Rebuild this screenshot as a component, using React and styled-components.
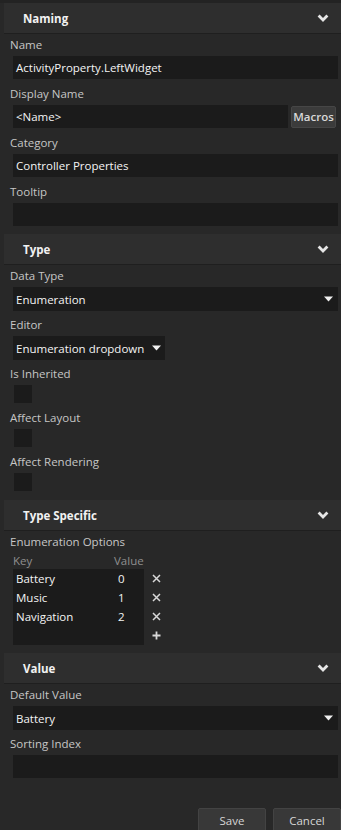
import React from "react";
import styled, { createGlobalStyle } from "styled-components";

const Global = createGlobalStyle`
  html, body { margin: 0; padding: 0; background: #282828; overflow: hidden; }
  body { font-family: "Segoe UI", "Open Sans", "Noto Sans", sans-serif; font-size: 11.5px; }
  * { box-sizing: border-box; }
`;

const Panel = styled.div`
  width: 341px;
  display: flex;
  flex-direction: column;
  background: #282828;
  border-top: 3px solid #232323;
`;

const SectionHeader = styled.div`
  margin-left: 4px;
  height: 31px;
  background: #2e2e2e;
  border-bottom: 1px solid #1f1f1f;
  display: flex;
  align-items: center;
  justify-content: space-between;
  padding: 0 12px 0 19px;
  color: #f2f2f2;
  font-weight: 700;
  font-size: 11.5px;
`;

const Section = styled.div`
  display: flex;
  flex-direction: column;
  padding: 0 3px 8px 10px;
  gap: ${(p) => p.$gap || 3}px;
`;

const Field = styled.div`
  display: flex;
  flex-direction: column;
`;

const Label = styled.div`
  height: 22px;
  line-height: 22px;
  color: #c6c6c6;
`;

const Input = styled.div`
  margin-left: 3px;
  height: 23px;
  background: #1b1b1b;
  color: #f4f4f4;
  display: flex;
  align-items: center;
  padding-left: 3px;
  flex: ${(p) => (p.$grow ? 1 : "none")};
`;

const Row = styled.div`
  display: flex;
  align-items: center;
  gap: 3px;
`;

const MacroButton = styled.div`
  height: 22px;
  width: 45px;
  margin-right: 2px;
  background: #3b3b3b;
  border: 1px solid #464646;
  border-radius: 2px;
  color: #d8d8d8;
  font-weight: 600;
  display: flex;
  align-items: center;
  justify-content: center;
`;

const Select = styled.div`
  margin-left: 3px;
  height: 24px;
  background: #1b1b1b;
  color: #f4f4f4;
  display: flex;
  align-items: center;
  justify-content: space-between;
  gap: 8px;
  padding: 0 5px 0 3px;
  align-self: ${(p) => (p.$inline ? "flex-start" : "stretch")};
  ${(p) => (p.$inline ? "padding-right: 4px;" : "")}
`;

const Check = styled.div`
  margin-left: 4px;
  width: 18px;
  height: 18px;
  background: #1b1b1b;
`;

const CheckField = styled.div`
  display: flex;
  flex-direction: column;
  margin-bottom: 1px;
`;

const TableHead = styled.div`
  display: grid;
  grid-template-columns: 101px 30px;
  margin-left: 3px;
  height: 16px;
  line-height: 16px;
  color: #8f8f8f;
`;

const TableWrap = styled.div`
  display: flex;
  align-items: flex-start;
`;

const TableBody = styled.div`
  margin-left: 3px;
  width: 131px;
  height: 76px;
  background: #1b1b1b;
  display: flex;
  flex-direction: column;
`;

const TableRow = styled.div`
  display: grid;
  grid-template-columns: 101px 30px;
  height: 19px;
  align-items: center;
  color: #f4f4f4;
  & > span:first-child { padding-left: 3px; }
  & > span:last-child { padding-left: 4px; }
`;

const Actions = styled.div`
  display: flex;
  flex-direction: column;
  width: 24px;
`;

const ActionCell = styled.div`
  height: 19px;
  display: flex;
  align-items: center;
  justify-content: center;
`;

const Footer = styled.div`
  display: flex;
  justify-content: flex-end;
  gap: 7px;
  padding-top: 22px;
`;

const Button = styled.div`
  width: 68px;
  height: 24px;
  background: #383838;
  border: 1px solid #434343;
  border-radius: 2px;
  color: #d6d6d6;
  display: flex;
  align-items: center;
  justify-content: center;
`;

const Chevron = () => (
  <svg width="12" height="8" viewBox="0 0 12 8">
    <polyline points="1.6,1.6 6,6 10.4,1.6" fill="none" stroke="#e6e6e6" strokeWidth="2.8" />
  </svg>
);

const Tri = () => (
  <svg width="9" height="6" viewBox="0 0 9 6">
    <polygon points="0,0.5 9,0.5 4.5,5.5" fill="#f0f0f0" />
  </svg>
);

const XIcon = () => (
  <svg width="9" height="9" viewBox="0 0 9 9">
    <path d="M1 1 L8 8 M8 1 L1 8" stroke="#d8d8d8" strokeWidth="1.5" />
  </svg>
);

const PlusIcon = () => (
  <svg width="9" height="9" viewBox="0 0 9 9">
    <path d="M4.5 0.5 V8.5 M0.5 4.5 H8.5" stroke="#d8d8d8" strokeWidth="1.8" />
  </svg>
);

const Header = ({ title }) => (
  <SectionHeader>
    <span>{title}</span>
    <Chevron />
  </SectionHeader>
);

const enumRows = [
  ["Battery", "0"],
  ["Music", "1"],
  ["Navigation", "2"],
];

export default function App() {
  return (
    <>
      <Global />
      <Panel>
        <Header title="Naming" />
        <Section $gap={4}>
          <Field>
            <Label>Name</Label>
            <Input>ActivityProperty.LeftWidget</Input>
          </Field>
          <Field>
            <Label>Display Name</Label>
            <Row>
              <Input $grow>&lt;Name&gt;</Input>
              <MacroButton>Macros</MacroButton>
            </Row>
          </Field>
          <Field>
            <Label>Category</Label>
            <Input>Controller Properties</Input>
          </Field>
          <Field>
            <Label>Tooltip</Label>
            <Input />
          </Field>
        </Section>

        <Header title="Type" />
        <Section>
          <Field>
            <Label>Data Type</Label>
            <Select>
              <span>Enumeration</span>
              <Tri />
            </Select>
          </Field>
          <Field>
            <Label>Editor</Label>
            <Select $inline>
              <span>Enumeration dropdown</span>
              <Tri />
            </Select>
          </Field>
          <CheckField>
            <Label>Is Inherited</Label>
            <Check />
          </CheckField>
          <CheckField>
            <Label>Affect Layout</Label>
            <Check />
          </CheckField>
          <CheckField>
            <Label>Affect Rendering</Label>
            <Check />
          </CheckField>
        </Section>

        <Header title="Type Specific" />
        <Section>
          <Field>
            <Label>Enumeration Options</Label>
            <TableHead>
              <span>Key</span>
              <span>Value</span>
            </TableHead>
            <TableWrap>
              <TableBody>
                {enumRows.map(([k, v]) => (
                  <TableRow key={k}>
                    <span>{k}</span>
                    <span>{v}</span>
                  </TableRow>
                ))}
              </TableBody>
              <Actions>
                {enumRows.map(([k]) => (
                  <ActionCell key={k}>
                    <XIcon />
                  </ActionCell>
                ))}
                <ActionCell>
                  <PlusIcon />
                </ActionCell>
              </Actions>
            </TableWrap>
          </Field>
        </Section>

        <Header title="Value" />
        <Section>
          <Field>
            <Label>Default Value</Label>
            <Select>
              <span>Battery</span>
              <Tri />
            </Select>
          </Field>
          <Field>
            <Label>Sorting Index</Label>
            <Input />
          </Field>
        </Section>
        <Footer>
          <Button>Save</Button>
          <Button>Cancel</Button>
        </Footer>
      </Panel>
    </>
  );
}
